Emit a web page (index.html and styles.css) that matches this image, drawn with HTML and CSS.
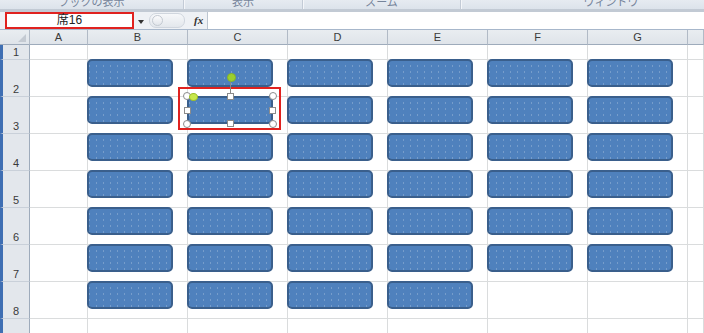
FILE: index.html
```html
<!DOCTYPE html>
<html lang="ja">
<head>
  <meta charset="UTF-8">
  <title>席配置</title>
  <link rel="stylesheet" href="styles.css">
</head>
<body>
  <div class="ribbon">
    <div class="group g1"><span>ブックの表示</span></div>
    <div class="group g2"><span>表示</span></div>
    <div class="group g3"><span>ズーム</span></div>
    <div class="group g4"><span>ウィンドウ</span></div>
  </div>
  <div class="fbar">
    <div class="namebox">席16</div>
    <div class="nb-arrow"></div>
    <div class="pill"><span class="pill-dot"></span></div>
    <div class="fx">fx</div>
    <div class="finput"></div>
  </div>
  <div class="sheet" id="sheet"></div>
  <script>
    const cols = ["A", "B", "C", "D", "E", "F", "G", ""];
    const sheet = document.getElementById('sheet');

    function cell(cls, text) {
      const div = document.createElement('div');
      div.className = cls;
      if (text) div.innerText = text;
      sheet.appendChild(div);
      return div;
    }

    function selection(shape) {
      const box = document.createElement('div');
      box.className = "sel-box";
      shape.appendChild(box);
      const parts = ["rot-line", "rot",
        "h c tl", "h c tr", "h c bl", "h c br",
        "h s tm", "h s bm", "h s ml", "h s mr", "adj"];
      parts.forEach(p => {
        const d = document.createElement('div');
        d.className = p;
        shape.appendChild(d);
      });
    }

    cell("corner");
    cols.forEach(c => cell("col-head", c));

    for (let r = 1; r <= 9; r++) {
      cell("row-head", String(r));
      cols.forEach((c, i) => {
        const div = cell("cell");
        const hasShape = r >= 2 && r <= 8 && i >= 1 && i <= 6 && !(r === 8 && i > 4);
        if (hasShape) {
          const shape = document.createElement('div');
          shape.className = "shape";
          div.appendChild(shape);
          if (r === 3 && c === "C") selection(shape);
        }
      });
    }
  </script>
</body>
</html>
```

FILE: styles.css
```css
body {
  margin: 0;
  font-family: 'Liberation Sans', 'Noto Sans CJK JP', sans-serif;
  background: #fff;
  color: #333;
  width: 704px;
  height: 333px;
  overflow: hidden;
}

.ribbon {
  display: flex;
  height: 9px;
  overflow: hidden;
  background: linear-gradient(#e6ebf1, #dce3eb);
  border-bottom: 3px solid #c2cad4;
}
.group {
  flex: none;
  display: flex;
  justify-content: center;
  border-right: 1px solid #c3cbd6;
  box-shadow: 1px 0 0 #f4f6f9;
}
.group span {
  font-size: 11px;
  line-height: 11px;
  margin-top: -3px;
  color: #75849a;
}
.g1 { width: 183px; }
.g2 { width: 118px; }
.g3 { width: 157px; }
.g4 { width: 300px; border-right: none; }

.fbar {
  display: flex;
  align-items: stretch;
  height: 17px;
  background: #eef1f5;
  border-bottom: 1px solid #a7b7cb;
}
.namebox {
  width: 125px;
  margin-left: 5px;
  border: 2px solid #e0221f;
  background: #fff;
  font-size: 12px;
  line-height: 13px;
  text-align: center;
  color: #222;
}
.nb-arrow {
  align-self: center;
  margin: 2px 0 0 4px;
  border-top: 4px solid #333;
  border-left: 3px solid transparent;
  border-right: 3px solid transparent;
}
.pill {
  align-self: center;
  width: 34px;
  height: 13px;
  margin-left: 5px;
  border: 1px solid #d0d6de;
  border-radius: 7px;
  background: linear-gradient(#f6f8fa, #e3e7ec);
  display: flex;
  align-items: center;
}
.pill-dot {
  width: 9px;
  height: 9px;
  margin-left: 2px;
  border-radius: 50%;
  border: 1px solid #c3c9d1;
  background: linear-gradient(#fbfbfc, #e2e6eb);
}
.fx {
  margin-left: 9px;
  font-family: 'Liberation Serif', serif;
  font-style: italic;
  font-weight: bold;
  font-size: 11px;
  line-height: 17px;
  color: #333;
}
.finput {
  flex: 1;
  margin-left: 4px;
  background: #fff;
  border-left: 1px solid #bcc5d0;
}

.sheet {
  display: grid;
  grid-template-columns: 30px 58px repeat(6, 100px) 1fr;
  grid-template-rows: 15px 15px repeat(8, 37px);
}
.corner, .col-head {
  background: linear-gradient(#e9edf1, #dfe4ea);
  border-bottom: 1px solid #9eabbb;
  border-right: 1px solid #b1bac6;
  box-sizing: border-box;
}
.corner {
  position: relative;
}
.corner::after {
  content: "";
  position: absolute;
  right: 3px;
  bottom: 2px;
  border-left: 8px solid transparent;
  border-bottom: 8px solid #c4cad2;
}
.col-head {
  font-size: 11px;
  line-height: 14px;
  text-align: center;
  color: #3a3a3a;
}
.row-head {
  background: #e3e7ec;
  border-left: 3px solid #3f6fb3;
  border-right: 1px solid #9eabbb;
  border-bottom: 1px solid #c9d0d9;
  box-sizing: border-box;
  font-size: 11px;
  line-height: 12px;
  text-align: center;
  color: #3a3a3a;
  display: flex;
  align-items: flex-end;
  justify-content: center;
  padding-bottom: 1px;
}
.cell {
  border-right: 1px solid #dadcdd;
  border-bottom: 1px solid #dadcdd;
  box-sizing: border-box;
}

.shape {
  position: relative;
  width: 86px;
  height: 28px;
  margin: -1px 0 0 -1px;
  box-sizing: border-box;
  border: 2px solid #3a5f8c;
  border-radius: 5px;
  background-color: #4f81bd;
  background-image: radial-gradient(circle, rgba(255, 255, 255, 0.22) 0.5px, transparent 0.9px);
  background-size: 7px 6px;
  background-position: 4px 2px;
}

.sel-box {
  position: absolute;
  left: -11px;
  top: -11px;
  width: 99px;
  height: 39px;
  border: 2px solid #e0221f;
}
.rot-line {
  position: absolute;
  left: 41px;
  top: -20px;
  width: 1px;
  height: 19px;
  background: #888;
}
.rot {
  position: absolute;
  left: 38px;
  top: -25px;
  width: 7px;
  height: 7px;
  border-radius: 50%;
  background: #9ccf2e;
  border: 1px solid #86b428;
}
.adj {
  position: absolute;
  left: 0;
  top: -5px;
  width: 7px;
  height: 6px;
  border-radius: 50%;
  background: #c7e84b;
  border: 1px solid #9bbd2a;
}
.h {
  position: absolute;
  background: #fff;
  border: 1px solid #8c8c8c;
  box-sizing: border-box;
}
.c {
  width: 8px;
  height: 8px;
  border-radius: 50%;
}
.s {
  width: 7px;
  height: 7px;
}
.tl { left: -6px; top: -6px; }
.tr { right: -6px; top: -6px; }
.bl { left: -6px; bottom: -6px; }
.br { right: -6px; bottom: -6px; }
.tm { left: 38px; top: -5px; }
.bm { left: 38px; bottom: -5px; }
.ml { left: -5px; top: 9px; }
.mr { right: -5px; top: 9px; }
```
